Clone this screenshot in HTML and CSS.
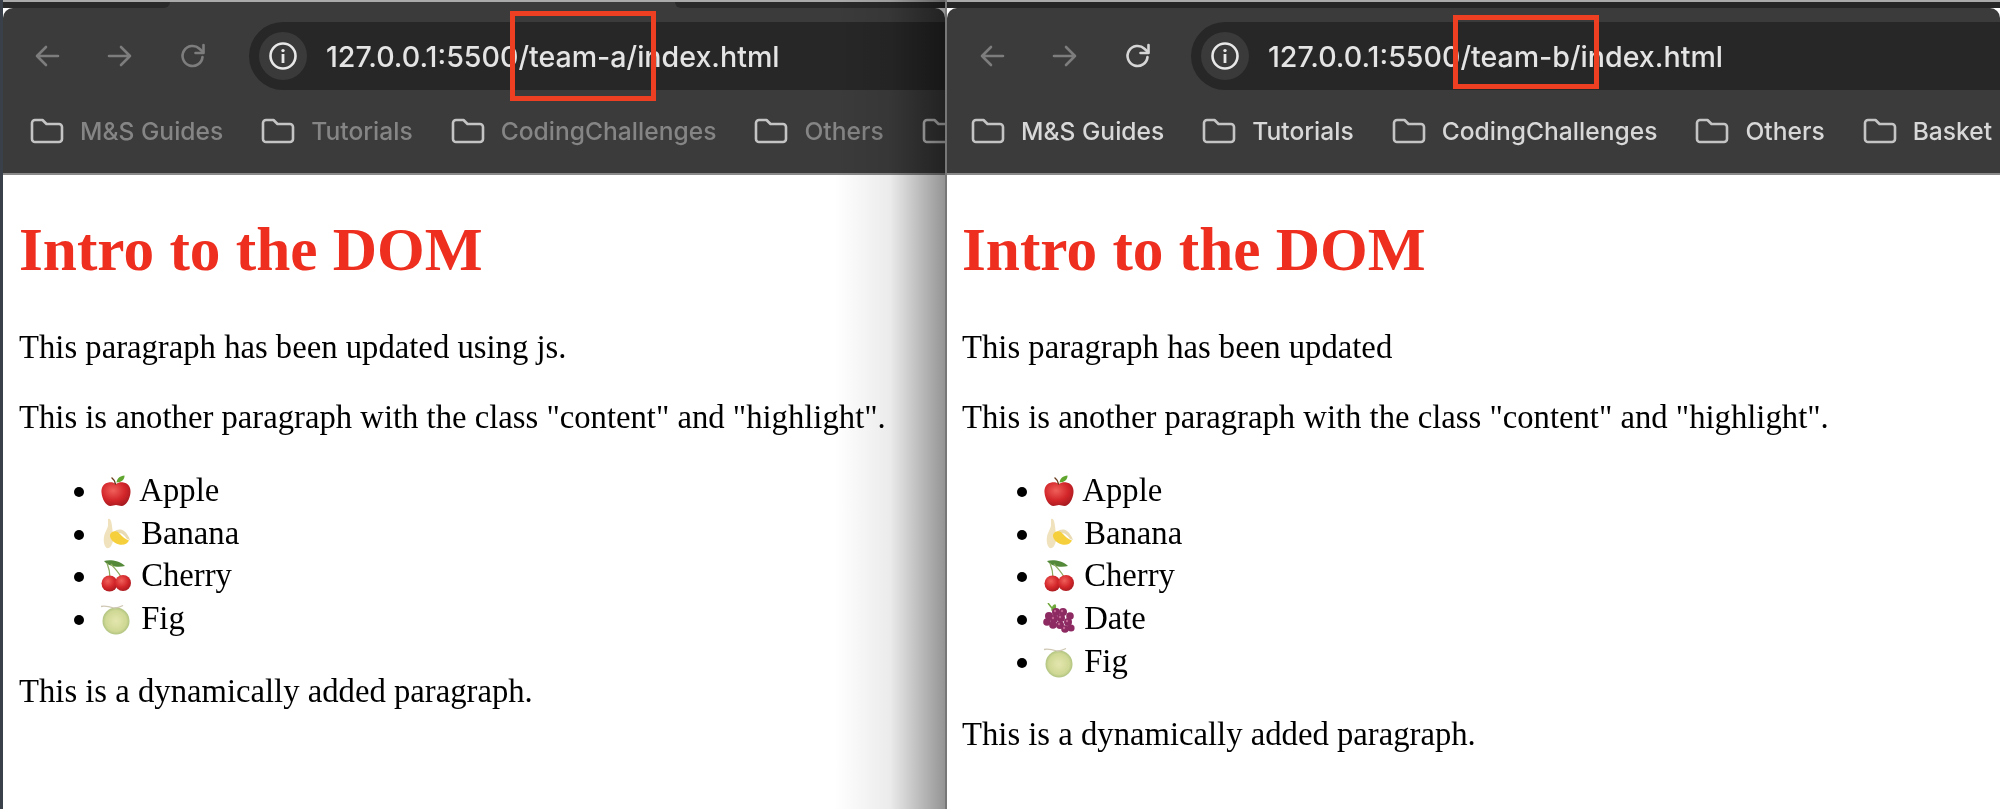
FILE: index.html
```html
<!DOCTYPE html>
<html lang="en">
<head>
  <meta charset="UTF-8" />
  <title>Intro to the DOM - team-a and team-b</title>
  <link rel="stylesheet" href="styles.css">
</head>
<body>
  <!-- shared icons and emoji -->
  <svg class="defs" width="0" height="0">
    <defs>
      <radialGradient id="redShine" cx="40%" cy="35%" r="70%">
        <stop offset="0" stop-color="#f0605a"/>
        <stop offset="0.6" stop-color="#d3262a"/>
        <stop offset="1" stop-color="#a51a20"/>
      </radialGradient>
      <radialGradient id="melonShine" cx="50%" cy="50%" r="55%">
        <stop offset="0" stop-color="#e4e6ae"/>
        <stop offset="0.7" stop-color="#cfd894"/>
        <stop offset="1" stop-color="#a3bb78"/>
      </radialGradient>
      <symbol id="i-back" viewBox="0 0 28 28">
        <path d="M25 14H4M13 5l-9 9 9 9" fill="none" stroke="currentColor" stroke-width="2.6" stroke-linecap="round" stroke-linejoin="round"/>
      </symbol>
      <symbol id="i-forward" viewBox="0 0 28 28">
        <path d="M3 14h21M15 5l9 9-9 9" fill="none" stroke="currentColor" stroke-width="2.6" stroke-linecap="round" stroke-linejoin="round"/>
      </symbol>
      <symbol id="i-reload" viewBox="0 0 28 28">
        <path d="M23.5 15a10 10 0 1 1-3-8.2L24 10" fill="none" stroke="currentColor" stroke-width="2.6" stroke-linecap="round"/>
        <path d="M24.5 3v8h-8" fill="none" stroke="currentColor" stroke-width="2.6" stroke-linecap="round" stroke-linejoin="round"/>
      </symbol>
      <symbol id="i-info" viewBox="0 0 30 30">
        <circle cx="15" cy="15" r="12.5" fill="none" stroke="currentColor" stroke-width="2.6"/>
        <circle cx="15" cy="9.6" r="1.7" fill="currentColor"/>
        <rect x="13.6" y="13" width="2.8" height="9" fill="currentColor"/>
      </symbol>
      <symbol id="i-folder" viewBox="0 0 34 26">
        <path d="M2 5a3 3 0 0 1 3-3h7.5l4 4H29a3 3 0 0 1 3 3v12a3 3 0 0 1-3 3H5a3 3 0 0 1-3-3z" fill="none" stroke="currentColor" stroke-width="2.6" stroke-linejoin="round"/>
      </symbol>
      <symbol id="e-apple" viewBox="0 0 32 32">
        <path d="M16 9c-2-1.600-4-2-6.500-1.800C4 7.800 1 12 1.500 17.500 2 24 6 31 10.500 31c2.200 0 3.500-1 5.500-1s3.300 1 5.500 1C26 31 30 24 30.500 17.500 31 12 28 7.800 22.500 7.200 20 7 18 7.400 16 9z" fill="url(#redShine)"/>
        <path d="M15.500 9c-.3-2.500-1.500-4.500-3.500-6" fill="none" stroke="#6b3a1c" stroke-width="1.500" stroke-linecap="round"/>
        <path d="M16.500 7.500C17 3.500 20 .8 24.500 .5c.2 3.800-3 7-8 7z" fill="#5fa52e"/>
      </symbol>
      <symbol id="e-banana" viewBox="0 0 32 32">
        <path d="M8 1c2-1 3 1 3.500 4 .8 4 .8 7 1.500 10 .7 4 1 8-2 13-1 2-3.500 3-5 1.500C4 27 3.500 24 3.800 20 4.200 15 7 12 8 8z" fill="#efe2bd"/>
        <path d="M14 14c3-3 7-3 10-1 3 2 5 6 6 9l-3-1c-2-3-5-6-8-6z" fill="#e9dcb5"/>
        <path d="M11 15c3-3 7-2 9 1 2.500 3 5 5 9 6.500-1.500 3.500-5.500 5-10 4-4-.8-7-3.500-8.500-6.500-.7-2-.8-3.500.5-5z" fill="#f6cf3c"/>
      </symbol>
      <symbol id="e-cherry" viewBox="0 0 32 32">
        <path d="M4 1c6-1.500 15-.5 21 5-6 1.500-16 1-21-5z" fill="#54893a"/>
        <path d="M7 3c2 5 3 10 3 15M11 4c3 4 8 8 11 15" fill="none" stroke="#8cab5e" stroke-width="1.300"/>
        <circle cx="9.500" cy="23.500" r="8" fill="url(#redShine)"/>
        <circle cx="23" cy="23" r="8" fill="url(#redShine)"/>
      </symbol>
      <symbol id="e-grapes" viewBox="0 0 32 32">
        <path d="M5 0l5 6.500M9 7c0-3 2-5 3-5 1 2 0 5-3 5z" fill="#6ea83c" stroke="#6ea83c" stroke-width="1.500"/>
        <g fill="#8d2a62">
          <circle cx="6" cy="13" r="4"/><circle cx="13" cy="9" r="4"/><circle cx="20" cy="9" r="4"/><circle cx="27" cy="13" r="3.800"/>
          <circle cx="4" cy="19" r="3.800"/><circle cx="11" cy="16" r="4"/><circle cx="18" cy="15" r="4"/><circle cx="25" cy="19" r="4"/>
          <circle cx="10" cy="22" r="3.800"/><circle cx="17" cy="22" r="4"/><circle cx="28" cy="25" r="3.600"/><circle cx="22" cy="26" r="3.800"/>
        </g>
        <g fill="#c0628f">
          <circle cx="12" cy="8" r="1.200"/><circle cx="19" cy="8" r="1.200"/><circle cx="10" cy="15" r="1.200"/><circle cx="17" cy="14" r="1.200"/><circle cx="24" cy="18" r="1.200"/><circle cx="16" cy="21" r="1.200"/><circle cx="21" cy="25" r="1.200"/>
        </g>
      </symbol>
      <symbol id="e-melon" viewBox="0 0 32 32">
        <circle cx="16" cy="18" r="13.500" fill="url(#melonShine)"/>
        <path d="M1 3.500c4-1 9 .3 13 1.500 3 .2 7-1.500 9-2.500" fill="none" stroke="#cfc8b4" stroke-width="1.300"/>
      </symbol>
    </defs>
  </svg>

  <div class="screens">
    <section class="window window-a">
      <div class="tabstrip"><span class="tab-a"></span><span class="tab-b"></span></div>
      <header class="chrome">
        <div class="toolbar">
          <svg class="nav nav-back"><use href="#i-back"/></svg>
          <svg class="nav nav-forward"><use href="#i-forward"/></svg>
          <svg class="nav nav-reload"><use href="#i-reload"/></svg>
          <div class="omnibox">
            <span class="info"><svg><use href="#i-info"/></svg></span>
            <span class="url">127.0.0.1:5500/team-a/index.html</span>
          </div>
        </div>
        <div class="bookmarks">
          <span class="mark"><svg><use href="#i-folder"/></svg>M&amp;S Guides</span>
          <span class="mark"><svg><use href="#i-folder"/></svg>Tutorials</span>
          <span class="mark"><svg><use href="#i-folder"/></svg>CodingChallenges</span>
          <span class="mark"><svg><use href="#i-folder"/></svg>Others</span>
          <span class="mark"><svg><use href="#i-folder"/></svg></span>
        </div>
      </header>
      <main class="page">
        <h1>Intro to the DOM</h1>
        <p>This paragraph has been updated using js.</p>
        <p>This is another paragraph with the class "content" and "highlight".</p>
        <ul>
          <li><svg class="emoji"><use href="#e-apple"/></svg> Apple</li>
          <li><svg class="emoji"><use href="#e-banana"/></svg> Banana</li>
          <li><svg class="emoji"><use href="#e-cherry"/></svg> Cherry</li>
          <li><svg class="emoji"><use href="#e-melon"/></svg> Fig</li>
        </ul>
        <p>This is a dynamically added paragraph.</p>
      </main>
      <div class="edge-shadow"></div>
      <div class="callout"></div>
    </section>

    <section class="window window-b">
      <div class="tabstrip"></div>
      <header class="chrome">
        <div class="toolbar">
          <svg class="nav nav-back"><use href="#i-back"/></svg>
          <svg class="nav nav-forward"><use href="#i-forward"/></svg>
          <svg class="nav nav-reload"><use href="#i-reload"/></svg>
          <div class="omnibox">
            <span class="info"><svg><use href="#i-info"/></svg></span>
            <span class="url">127.0.0.1:5500/team-b/index.html</span>
          </div>
        </div>
        <div class="bookmarks">
          <span class="mark"><svg><use href="#i-folder"/></svg>M&amp;S Guides</span>
          <span class="mark"><svg><use href="#i-folder"/></svg>Tutorials</span>
          <span class="mark"><svg><use href="#i-folder"/></svg>CodingChallenges</span>
          <span class="mark"><svg><use href="#i-folder"/></svg>Others</span>
          <span class="mark"><svg><use href="#i-folder"/></svg>Basket</span>
        </div>
      </header>
      <main class="page">
        <h1>Intro to the DOM</h1>
        <p>This paragraph has been updated</p>
        <p>This is another paragraph with the class "content" and "highlight".</p>
        <ul>
          <li><svg class="emoji"><use href="#e-apple"/></svg> Apple</li>
          <li><svg class="emoji"><use href="#e-banana"/></svg> Banana</li>
          <li><svg class="emoji"><use href="#e-cherry"/></svg> Cherry</li>
          <li><svg class="emoji"><use href="#e-grapes"/></svg> Date</li>
          <li><svg class="emoji"><use href="#e-melon"/></svg> Fig</li>
        </ul>
        <p>This is a dynamically added paragraph.</p>
      </main>
      <div class="callout"></div>
    </section>
  </div>
</body>
</html>
```

FILE: styles.css
```css
html, body {
  margin: 0;
  height: 100%;
  overflow: hidden;
  background: #fff;
}
.defs {
  position: absolute;
}
.screens {
  display: grid;
  grid-template-columns: 945px 1fr;
  height: 809px;
  filter: blur(0.5px);
}
.window {
  position: relative;
  overflow: hidden;
  display: flex;
  flex-direction: column;
  background: #fff;
}
.window-a {
  border-left: 3px solid #39404a;
}
.window-b {
  border-left: 2px solid #777;
}

/* browser chrome */
.tabstrip {
  display: flex;
  justify-content: space-between;
  height: 6px;
  border-top: 2px solid #aaa;
  background: #3b3b3b;
}
.window-b .tabstrip {
  background: #262626;
}
.tab-a {
  width: 167px;
  background: #2a2a2a;
  border-bottom-right-radius: 10px;
}
.tab-b {
  width: 270px;
  background: #2a2a2a;
  border-bottom-left-radius: 10px;
}
.chrome {
  flex: none;
  height: 167px;
  box-sizing: border-box;
  background: #3b3b3b;
  border-radius: 10px 10px 0 0;
  border-bottom: 2px solid #8a8a8a;
}
.toolbar {
  display: flex;
  align-items: center;
  height: 68px;
  margin-top: 14px;
  padding-left: 30px;
}
.nav {
  width: 28px;
  height: 28px;
  margin-right: 45px;
  color: #7d7d7d;
  flex: none;
}
.window-b .toolbar {
  padding-left: 31px;
}
.window-b .nav-reload {
  color: #d6d6d6;
}
.omnibox {
  flex: 1;
  display: flex;
  align-items: center;
  height: 68px;
  margin-left: -3px;
  padding-left: 10px;
  border-radius: 34px 0 0 34px;
  background: #272727;
  margin-right: -40px;
}
.window-b .omnibox {
  margin-left: -6px;
}
.info {
  display: flex;
  align-items: center;
  justify-content: center;
  width: 48px;
  height: 48px;
  border-radius: 50%;
  background: #3a3a3a;
  color: #e8e8e8;
}
.info svg {
  width: 30px;
  height: 30px;
}
.url {
  margin-left: 19px;
  font: 500 28.6px "Inter", "Liberation Sans", sans-serif;
  color: #e4e4e4;
  white-space: nowrap;
}
.bookmarks {
  display: flex;
  gap: 38px;
  height: 30px;
  margin-top: 26px;
  padding-left: 27px;
  white-space: nowrap;
}
.window-b .bookmarks {
  padding-left: 24px;
}
.mark {
  display: flex;
  align-items: center;
  gap: 16px;
  font: 500 24.6px "Inter", "Liberation Sans", sans-serif;
  color: #858585;
}
.mark svg {
  width: 34px;
  height: 26px;
  color: #c4c4c4;
}
.window-b .mark {
  color: #d8d8d8;
}

/* page content */
.page {
  padding: 0 16px;
  font-family: "Liberation Serif", "Times New Roman", serif;
  font-size: 32.7px;
  line-height: 31px;
  color: #000;
  white-space: nowrap;
}
.window-b .page {
  padding-left: 15px;
}
h1 {
  margin: 43px 0 52px;
  font-size: 61.3px;
  line-height: 62px;
  font-weight: bold;
  color: #ee2f1f;
}
p {
  margin: 39px 0 0;
}
ul {
  margin: 36px 0;
  padding: 0 0 0 81px;
}
.window-a ul {
  padding-left: 81px;
}
ul + p {
  margin-top: 0;
}
li {
  line-height: 42.7px;
}
.emoji {
  width: 32px;
  height: 32px;
  margin-right: 1px;
  vertical-align: -6px;
}

/* overlays */
.edge-shadow {
  position: absolute;
  top: 0;
  right: 0;
  bottom: 0;
  width: 110px;
  background: linear-gradient(to right, rgba(0, 0, 0, 0), rgba(0, 0, 0, 0.08) 50%, rgba(0, 0, 0, 0.42));
  pointer-events: none;
}
.callout {
  position: absolute;
  box-sizing: border-box;
  border: 5px solid #ee3f22;
}
.window-a .callout {
  left: 507px;
  top: 11px;
  width: 146px;
  height: 90px;
}
.window-b .callout {
  left: 506px;
  top: 15px;
  width: 146px;
  height: 74px;
}
```
